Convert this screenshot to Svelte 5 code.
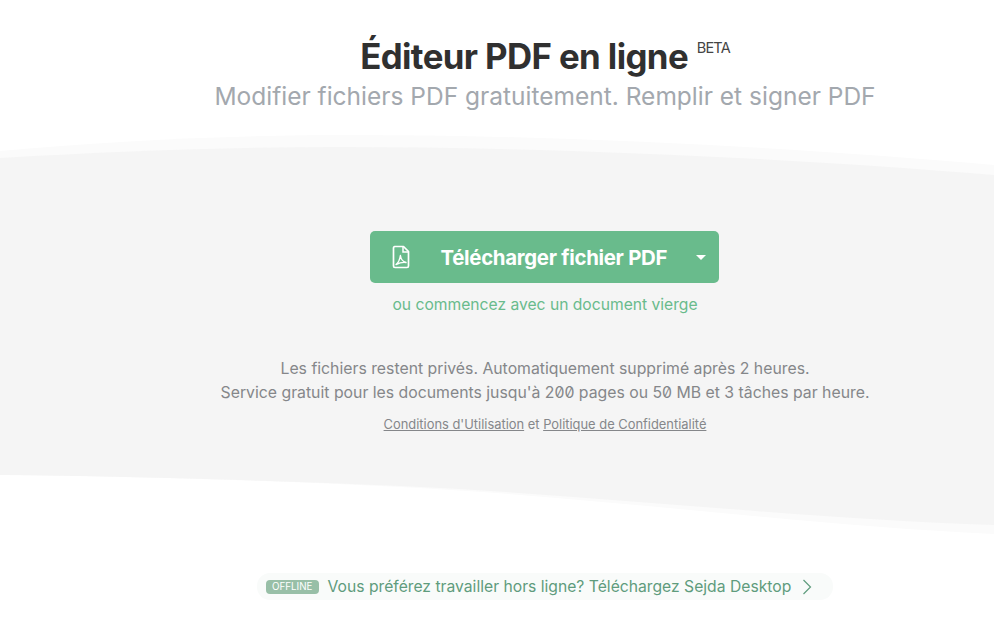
<script>
  const title = 'Éditeur PDF en ligne'
  const subtitle = 'Modifier fichiers PDF gratuitement. Remplir et signer PDF'
</script>

<div class="page">
  <header class="head">
    <h1>{title} <sup>BETA</sup></h1>
    <p class="sub">{subtitle}</p>
  </header>

  <svg class="wave" viewBox="0 0 994 40" preserveAspectRatio="none" aria-hidden="true">
    <path d="M0 16C120 5 240 0 350 0C560 0 790 12 994 30V40H0Z" fill="#fbfbfb" />
    <path d="M0 23C120 16 230 12 340 12C560 12 800 24 994 40V40H0Z" fill="#f5f5f5" />
  </svg>

  <main class="panel">
    <div class="upload">
      <svg class="pdf" viewBox="0 0 18 24" width="18" height="24" aria-hidden="true">
        <path d="M2.5 1.5H11.5L16.5 6.5V21a1.5 1.5 0 0 1-1.5 1.5H3A1.5 1.5 0 0 1 1.5 21V3A1.500 1.500 0 0 1 3 1.500Z" fill="none" stroke="#fff" stroke-width="1.700" stroke-linejoin="round" />
        <path d="M11 1.500V7H16.500" fill="none" stroke="#fff" stroke-width="1.500" />
        <path d="M4 19.500C6 18 7.800 14.500 8.400 10.500C8.800 14 10.500 16.500 14 17.500C10.500 17 7 18 4 19.500Z" fill="none" stroke="#fff" stroke-width="1.400" stroke-linejoin="round" />
      </svg>
      <span class="label">Télécharger fichier PDF</span>
      <span class="caret"></span>
    </div>
    <a class="blank" href="#blank">ou commencez avec un document vierge</a>
    <p class="info">
      Les fichiers restent privés. Automatiquement supprimé après 2 heures.<br />
      Service gratuit pour les documents jusqu'à 200 pages ou 50 MB et 3 tâches par heure.
    </p>
    <p class="legal">
      <a href="#terms">Conditions d'Utilisation</a> et <a href="#privacy">Politique de Confidentialité</a>
    </p>
  </main>

  <svg class="wave-bottom" viewBox="0 0 994 60" preserveAspectRatio="none" aria-hidden="true">
    <path d="M0 0H994V59C800 50 600 22 400 12C260 5 120 1 0 0Z" fill="#fbfbfb" />
    <path d="M0 0H994V50C800 44 600 20 400 11C260 5 120 1 0 0Z" fill="#f5f5f5" />
  </svg>

  <div class="offline-row">
    <a class="offline" href="#desktop">
      <span class="tag">OFFLINE</span>
      <span class="msg">Vous préférez travailler hors ligne? Téléchargez Sejda Desktop</span>
      <svg class="next" viewBox="0 0 10 16" width="10" height="16" aria-hidden="true">
        <path d="M1.500 1L8.500 8L1.500 15" fill="none" stroke="#5f9c7d" stroke-width="1.200" />
      </svg>
    </a>
  </div>
</div>

<style>
  :global(body) {
    margin: 0;
    background: #fff;
    font-family: Inter, "Liberation Sans", sans-serif;
    font-feature-settings: "zero";
  }
  .page {
    height: 628px;
    overflow: hidden;
  }
  .head {
    height: 135px;
    box-sizing: border-box;
    padding: 33px 0 0 96px;
    text-align: center;
  }
  h1 {
    margin: 0 0 1px;
    font-size: 34.800px;
    line-height: 46px;
    font-weight: 700;
    letter-spacing: -0.6px;
    color: #303030;
  }
  sup {
    margin-left: 1px;
    font-size: 14.500px;
    font-weight: 400;
    letter-spacing: -0.8px;
    vertical-align: 16px;
    line-height: 0;
    color: #444;
  }
  .sub {
    margin: 0;
    font-size: 24.500px;
    line-height: 32px;
    color: #a3a8ae;
  }
  .wave, .wave-bottom {
    display: block;
    width: 100%;
  }
  .wave { height: 40px; }
  .wave-bottom { height: 60px; }
  .panel {
    height: 300px;
    box-sizing: border-box;
    padding: 56px 0 0 96px;
    background: #f5f5f5;
    display: flex;
    flex-direction: column;
    align-items: center;
  }
  .upload {
    width: 349px;
    height: 52px;
    margin-left: -2px;
    box-sizing: border-box;
    padding: 0 13px 0 22px;
    border-radius: 5px;
    background: #69bb8c;
    color: #fff;
    display: flex;
    align-items: center;
  }
  .label {
    margin-left: 31px;
    font-size: 20.400px;
    font-weight: 700;
    letter-spacing: -0.3px;
    white-space: nowrap;
  }
  .caret {
    margin-left: auto;
    border: 5px solid transparent;
    border-top-color: #fff;
    border-bottom-width: 0;
  }
  .blank {
    margin-top: 12px;
    font-size: 15.650px;
    line-height: 20px;
    color: #69bb8c;
    text-decoration: none;
  }
  .info {
    margin: 42px 0 0;
    font-size: 15.800px;
    line-height: 24px;
    text-align: center;
    color: #85878a;
  }
  .legal {
    margin: 10px 0 0;
    font-size: 12.900px;
    line-height: 20px;
    color: #85878a;
  }
  .legal a { color: #85878a; }
  .offline-row {
    margin-top: 38px;
    padding-left: 96px;
    display: flex;
    justify-content: center;
  }
  .offline {
    width: 576px;
    height: 27px;
    box-sizing: border-box;
    padding: 0 20px 0 9px;
    border-radius: 13px;
    background: #f9fbfa;
    display: flex;
    align-items: center;
    gap: 9px;
    text-decoration: none;
    white-space: nowrap;
  }
  .tag {
    padding: 0 6px;
    height: 14px;
    line-height: 14px;
    border-radius: 4px;
    background: #98bfa7;
    color: #fff;
    font-size: 9.800px;
  }
  .msg {
    font-size: 15.700px;
    color: #5f9c7d;
  }
  .next { margin-left: 2px; }
</style>
